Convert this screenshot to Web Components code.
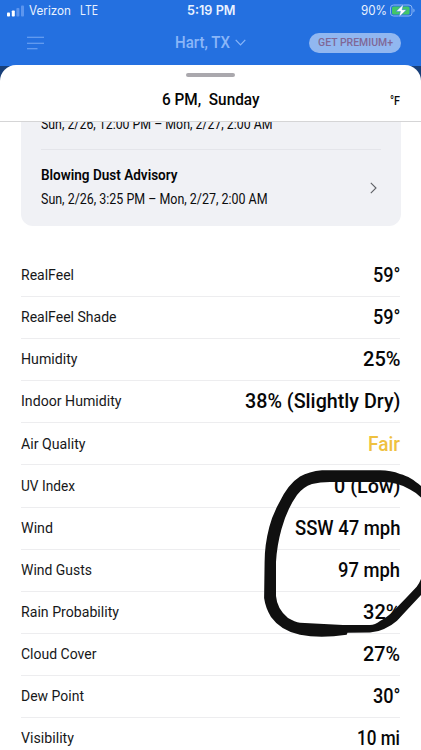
<!DOCTYPE html>
<html lang="en">
<head>
<meta charset="utf-8">
<title>Hourly weather details</title>
<style>
  html, body { margin: 0; width: 421px; height: 750px; overflow: hidden; background: #fff; }
  body { font-family: Roboto, "Liberation Sans", sans-serif; color: #0b0b0d; }
</style>
</head>
<body>
<weather-screen></weather-screen>
<script>
const attach = (el, html) => { el.attachShadow({ mode: 'open' }).innerHTML = html; };

/* Condensed text: squeezes its slotted text to the width given in "w". */
customElements.define('fit-text', class extends HTMLElement {
  connectedCallback() {
    if (this.shadowRoot) return;
    attach(this, `<style>
      :host { display: block; flex: none; white-space: pre; }
      span { display: inline-block; transform-origin: 0 50%; }
    </style><span><slot></slot></span>`);
    const w = parseFloat(this.getAttribute('w'));
    this.style.width = w + 'px';
    const s = this.shadowRoot.querySelector('span');
    s.style.transform = `scaleX(${w / s.getBoundingClientRect().width})`;
  }
});

customElements.define('status-bar', class extends HTMLElement {
  constructor() {
    super();
    attach(this, `<style>
      :host { display: grid; grid-template-columns: 1fr auto 1fr; height: 22px; align-items: center; box-sizing: border-box;
        padding: 0 6px 0 7px; color: #e9f2ff; font: 12.5px/22px Inter, sans-serif; }
      .l, .r { display: flex; align-items: center; }
      .l svg { margin-right: 4px; } .lte { margin-left: 9px; }
      .r { justify-content: flex-end; gap: 3px; }
      .t { font-weight: 600; }
      svg { display: block; flex: none; overflow: visible; }
    </style>
    <div class="l"><svg width="18" height="12" viewBox="0 0 18 12">
      <rect x="0" y="7.5" width="3" height="4" rx=".8" fill="#fff"/><rect x="4.8" y="5.5" width="3" height="6" rx=".8" fill="#fff"/>
      <rect x="9.4" y="3" width="3" height="8.5" rx=".8" fill="#5c95ee"/><rect x="14" y=".5" width="3" height="11" rx=".8" fill="#5c95ee"/></svg>
      <fit-text w="42">Verizon</fit-text><fit-text class="lte" w="18">LTE</fit-text></div>
    <fit-text class="t" w="48.5">5:19 PM</fit-text>
    <div class="r"><fit-text w="26">90%</fit-text><svg width="25" height="14" viewBox="0 0 25 14">
      <rect x=".5" y="1" width="21.5" height="11" rx="3" fill="none" stroke="#8bb5f5"/>
      <rect x="2" y="2.5" width="17.5" height="8" rx="1.6" fill="#43c667"/>
      <path d="M23.4 4.5v4c1.6-.7 1.6-3.3 0-4z" fill="#8bb5f5"/>
      <path d="M13.6 0 6 7.4h4.4L8.9 13.3l7.6-7.6h-4.4z" fill="#fff" stroke="#2470e0" stroke-width=".5"/></svg></div>`);
  }
});

customElements.define('nav-bar', class extends HTMLElement {
  constructor() {
    super();
    attach(this, `<style>
      :host { display: grid; grid-template-columns: 108px auto 1fr; column-gap: 40px; height: 41px; align-items: center; padding: 0 20px 0 27px; }
      .c { display: flex; align-items: center; gap: 5px; color: #8ab6f8; font: 500 16.4px/20px Roboto, sans-serif; }
      .p { justify-self: end; width: 92px; height: 20px; border-radius: 10px; background: #91b7f0; color: #806796;
        display: flex; justify-content: center; font: 500 11px/19px Roboto, sans-serif; }
      svg { display: block; }
    </style>
    <svg width="18" height="14" viewBox="0 0 18 14" fill="none" stroke="#76a8f4" stroke-width="1.1"><path d="M0 1.3h17M0 7.3h17M0 12.8h10.5"/></svg>
    <div class="c"><fit-text w="55">Hart, TX</fit-text><svg width="11" height="7" viewBox="0 0 11 7" fill="none" stroke="#8ab6f8" stroke-width="1.2"><path d="m.7.8 4.8 5L10.3.8"/></svg></div>
    <div class="p"><fit-text w="75">GET PREMIUM+</fit-text></div>`);
  }
});

customElements.define('sheet-header', class extends HTMLElement {
  constructor() {
    super();
    attach(this, `<style>
      :host { display: grid; grid-template-columns: 1fr auto 1fr; grid-template-rows: 21px 36px; height: 57px; box-sizing: border-box;
        border-bottom: 1px solid #d5d5d6; background: #fff; border-radius: 16px 16px 0 0; padding-right: 21px; position: relative; z-index: 1; }
      .g { grid-column: 1 / 4; justify-self: center; margin: 8px -21px 0 0; width: 49px; height: 4px; border-radius: 2px; background: #aaa8ad; }
      .t { grid-column: 2; font: 500 16.3px/28px Roboto, sans-serif; color: #050505; margin: 0 -22px 0 0; }
      .u { grid-column: 3; justify-self: end; font: 500 12.5px/29px Roboto, sans-serif; }
    </style><div class="g"></div><fit-text class="t" w="97.5">6 PM,  Sunday</fit-text><fit-text class="u" w="10">°F</fit-text>`);
  }
});

customElements.define('alert-card', class extends HTMLElement {
  constructor() {
    super();
    attach(this, `<style>
      :host { display: block; box-sizing: border-box; height: 114px; margin: -10px 20.5px 0 20.5px; padding: 0 20px; background: #f0f1f5; border-radius: 12px; font: 14.5px/20px Roboto, sans-serif; }
      .a { height: 38px; padding-top: 3px; box-sizing: border-box; border-bottom: 1px solid #e4e5ea; }
      .b { display: flex; align-items: center; justify-content: space-between; height: 75px; padding-right: 3.5px; }
      .h { font-weight: 600; font-size: 14px; margin-bottom: 5px; color: #050507; }
      .x { display: flex; flex-direction: column; }
    </style>
    <div class="a"><fit-text w="231.5">Sun, 2/26, 12:00 PM – Mon, 2/27, 2:00 AM</fit-text></div>
    <div class="b"><div class="x"><fit-text class="h" w="136.5">Blowing Dust Advisory</fit-text><fit-text w="226.5">Sun, 2/26, 3:25 PM – Mon, 2/27, 2:00 AM</fit-text></div>
    <svg width="7" height="12" viewBox="0 0 7 12" fill="none" stroke="#5e6065" stroke-width="1.1"><path d="m.8.8 5.2 5.2L.8 11.2"/></svg></div>`);
  }
});

customElements.define('detail-row', class extends HTMLElement {
  connectedCallback() {
    if (this.shadowRoot) return;
    const a = n => this.getAttribute(n);
    attach(this, `<style>
      :host { display: flex; flex: none; box-sizing: border-box; height: 42.13px; justify-content: space-between; align-items: flex-start; border-bottom: 1px solid #ededef; }
      .k { font: 14.6px/41px Roboto, sans-serif; color: #17181a; padding-top: .3px; }
      .v { font: 500 19.6px/41px Roboto, sans-serif; color: ${a('tone') || '#070708'}; padding-top: .3px; }
    </style><fit-text class="k" w="${a('kw')}">${a('label')}</fit-text><fit-text class="v" w="${a('vw')}">${a('value')}</fit-text>`);
  }
});

/* Hand-drawn marker loop around the wind values. */
customElements.define('marker-loop', class extends HTMLElement {
  constructor() {
    super();
    attach(this, `<style>:host { display: block; position: absolute; left: 0; top: 0; width: 421px; height: 750px; } svg { display: block; }</style>
    <svg width="421" height="750" viewBox="0 0 421 750"><path fill="#101010" d="M421 486C414 480 408 476 400 474Q391 470.3 380 470.3L322 470.3Q309 471.5 300 476.5Q288 484 279 503Q272 516 269.3 527Q264.6 545 264.6 562L264.1 598Q265.5 608 271 617Q281 631 300 634.7Q320 639 346.7 634.7L347.5 632.7L370 632.5Q378 632 384 629Q391 626 397 620.7L410 606.7L421 595V579Q419 584 416.7 586.7L407 597L393 611.5Q386 618 380 621Q375 625 370 625L343 625L300 622.7Q295 622 288 618Q277 609 276 596L276 562Q277 545 281.5 529Q287 509 297 495Q303 487 312 484Q320 482 330 482L383 482Q398 482 410 489.5Q417 493 421 497.5Z"/></svg>`);
  }
});

const rows = [
  ['RealFeel', 53, '59°', 27.5], ['RealFeel Shade', 95.5, '59°', 27.5], ['Humidity', 56.5, '25%', 37.5],
  ['Indoor Humidity', 100.5, '38% (Slightly Dry)', 155.5], ['Air Quality', 64.5, 'Fair', 32, '#efc13f'], ['UV Index', 54, '0 (Low)', 66.5],
  ['Wind', 32, 'SSW 47 mph', 105.5], ['Wind Gusts', 71, '97 mph', 62], ['Rain Probability', 98, '32%', 37.5],
  ['Cloud Cover', 75.5, '27%', 37], ['Dew Point', 63, '30°', 27.5], ['Visibility', 53, '10 mi', 43]
];

customElements.define('weather-screen', class extends HTMLElement {
  constructor() {
    super();
    attach(this, `<style>
      :host { display: block; position: relative; width: 421px; height: 750px; overflow: hidden; background: #fff; }
      .top { background: #2470e0; height: 65px; }
      .sheet { background: linear-gradient(#2470e0, #2470e0) 0 0 / 100% 1px no-repeat, linear-gradient(#173f79, #173f79) 0 0 / 100% 18px no-repeat; }
      .rows { display: flex; flex-direction: column; margin: 28.8px 20.8px 0 20.5px; }
    </style>
    <div class="top"><status-bar></status-bar><nav-bar></nav-bar></div>
    <div class="sheet"><sheet-header></sheet-header></div>
    <alert-card></alert-card>
    <div class="rows">${rows.map(([l, kw, v, vw, t]) => `<detail-row label="${l}" kw="${kw}" value="${v}" vw="${vw}" ${t ? `tone="${t}"` : ''}></detail-row>`).join('')}</div>
    <marker-loop></marker-loop>`);
  }
});
</script>
</body>
</html>
